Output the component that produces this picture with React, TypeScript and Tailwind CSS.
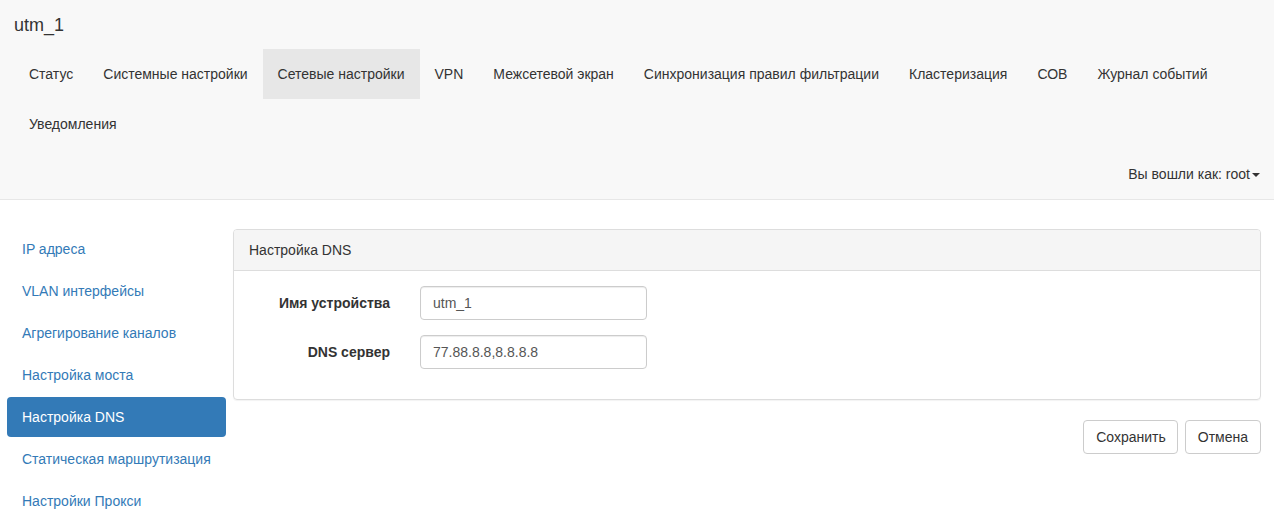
import React from "react";

const topItems = [
  "Статус",
  "Системные настройки",
  "Сетевые настройки",
  "VPN",
  "Межсетевой экран",
  "Синхронизация правил фильтрации",
  "Кластеризация",
  "СОВ",
  "Журнал событий",
  "Уведомления",
];

const sideItems = [
  "IP адреса",
  "VLAN интерфейсы",
  "Агрегирование каналов",
  "Настройка моста",
  "Настройка DNS",
  "Статическая маршрутизация",
  "Настройки Прокси",
];

export default function App() {
  return (
    <div className="min-h-[519px] bg-white text-[14px] leading-[20px] text-[#333] font-['Liberation_Sans',Arial,sans-serif]">
      <div className="bg-[#f8f8f8] border-b border-[#e7e7e7] pl-[14px] pr-[14px]">
        <div className="h-[49px] flex items-center text-[18px] text-[#333]">utm_1</div>
        <ul className="flex flex-wrap">
          {topItems.map((t) => (
            <li
              key={t}
              className={`h-[50px] px-[15px] flex items-center text-[#333] ${
                t === "Сетевые настройки" ? "bg-[#e7e7e7]" : ""
              }`}
            >
              {t}
            </li>
          ))}
        </ul>
        <div className="h-[50px] flex items-center justify-end pr-[0px]">
          <span>Вы вошли как: root</span>
          <span className="ml-[2px] mt-[1px] w-0 h-0 border-l-[4px] border-r-[4px] border-t-[4px] border-l-transparent border-r-transparent border-t-[#333]" />
        </div>
      </div>

      <div className="flex pl-[7px] pr-[13px] pt-[29px] gap-[7px]">
        <ul className="w-[219px] flex flex-col gap-[2px]">
          {sideItems.map((t) => (
            <li
              key={t}
              className={`h-[40px] px-[15px] flex items-center rounded-[4px] ${
                t === "Настройка DNS" ? "bg-[#337ab7] text-white" : "text-[#337ab7]"
              }`}
            >
              {t}
            </li>
          ))}
        </ul>
        <div className="flex-1">
          <div className="border border-[#ddd] rounded-[4px] shadow-[0_1px_1px_rgba(0,0,0,0.05)]">
            <div className="h-[41px] px-[15px] flex items-center bg-[#f5f5f5] border-b border-[#ddd] rounded-t-[3px] text-[#333]">
              Настройка DNS
            </div>
            <div className="p-[15px] flex flex-col gap-[15px] pb-[30px]">
              <div className="flex items-center">
                <label className="w-[141px] text-right font-bold text-[#333]">Имя устройства</label>
                <div className="ml-[30px] w-[227px] h-[34px] border border-[#ccc] rounded-[4px] px-[12px] flex items-center text-[#555] shadow-[inset_0_1px_1px_rgba(0,0,0,0.075)]">
                  utm_1
                </div>
              </div>
              <div className="flex items-center">
                <label className="w-[141px] text-right font-bold text-[#333]">DNS сервер</label>
                <div className="ml-[30px] w-[227px] h-[34px] border border-[#ccc] rounded-[4px] px-[12px] flex items-center text-[#555] shadow-[inset_0_1px_1px_rgba(0,0,0,0.075)]">
                  77.88.8.8,8.8.8.8
                </div>
              </div>
            </div>
          </div>
          <div className="flex justify-end gap-[7px] mt-[20px]">
            <button className="h-[34px] pl-[12px] pr-[11px] border border-[#ccc] rounded-[4px] bg-white text-[#333]">
              Сохранить
            </button>
            <button className="h-[34px] px-[12px] border border-[#ccc] rounded-[4px] bg-white text-[#333]">
              Отмена
            </button>
          </div>
        </div>
      </div>
    </div>
  );
}
